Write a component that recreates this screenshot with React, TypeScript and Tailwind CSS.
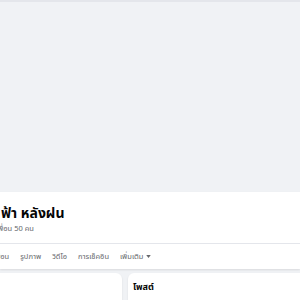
export default function App() {
  const tabs = ["เพื่อน", "รูปภาพ", "วิดีโอ", "การเช็คอิน"];
  return (
    <div
      className="h-[300px] w-[300px] overflow-hidden bg-[#f0f2f5]"
      style={{ fontFamily: '"Noto Sans", "Noto Sans Thai", sans-serif' }}
    >
      <div className="h-[2px] bg-[#e4e6eb]" />
      <div className="h-[190px] bg-[#f0f2f5]" />
      <div className="bg-white shadow-[0_1px_2px_rgba(0,0,0,0.1)]">
        <div className="pt-[12px] pb-[9px]">
          <div className="pl-[1px] text-[14px] font-bold leading-[18px] text-[#050505]">ฟ้า หลังฝน</div>
          <div className="-ml-[4px] text-[7.5px] leading-[12px] text-[#65676b]">เพื่อน 50 คน</div>
        </div>
        <div className="border-t border-[#e4e6eb]">
          <div className="-ml-[7px] flex h-[25px] items-start gap-[11px] pt-[7px] text-[7.5px] leading-[10px] text-[#65676b]">
            {tabs.map((t) => (
              <span key={t}>{t}</span>
            ))}
            <span className="flex items-center gap-[3px]">
              เพิ่มเติม
              <svg width="5" height="3" viewBox="0 0 6 4">
                <path d="M0 0h6L3 4z" fill="#65676b" />
              </svg>
            </span>
          </div>
        </div>
      </div>
      <div className="mt-[4px] flex gap-[6px]">
        <div className="h-[40px] w-[122px] rounded-r-[6px] bg-white shadow-[0_1px_2px_rgba(0,0,0,0.1)]" />
        <div className="h-[40px] flex-1 rounded-l-[6px] bg-white px-[5px] pt-[9px] shadow-[0_1px_2px_rgba(0,0,0,0.1)]">
          <div className="text-[9px] font-bold leading-[10px] text-[#050505]">โพสต์</div>
        </div>
      </div>
    </div>
  );
}
